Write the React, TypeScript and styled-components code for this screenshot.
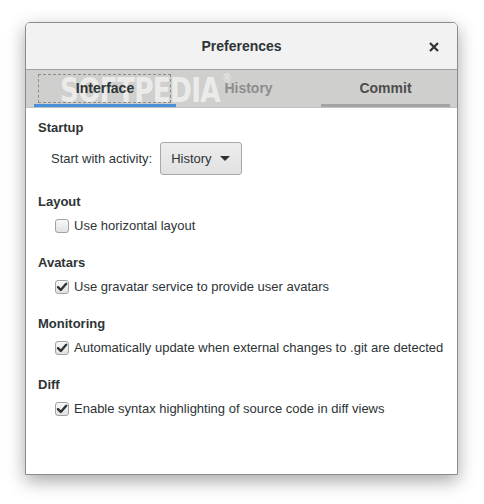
import styled, { createGlobalStyle } from "styled-components";

const GlobalStyle = createGlobalStyle`
  html, body {
    margin: 0;
    padding: 0;
    background: #ffffff;
  }
  body {
    font-family: "Liberation Sans", Arial, sans-serif;
    font-size: 13px;
    color: #2e3436;
  }
`;

const Page = styled.div`
  width: 484px;
  height: 504px;
  padding: 22px 0 0 25px;
  box-sizing: border-box;
`;

const Window = styled.div`
  width: 433px;
  height: 453px;
  box-sizing: border-box;
  border: 1px solid #8c8c8c;
  border-radius: 5px 5px 0 0;
  background: #ffffff;
  box-shadow: 0 6px 18px rgba(0, 0, 0, 0.35);
  display: flex;
  flex-direction: column;
  overflow: hidden;
`;

const TitleBar = styled.div`
  height: 46px;
  flex: none;
  background: #f2f2f2;
  border-bottom: 1px solid #a3a3a3;
  display: flex;
  align-items: center;
  justify-content: center;
  position: relative;
`;

const Title = styled.div`
  font-weight: bold;
  font-size: 14px;
  color: #2e3436;
`;

const CloseButton = styled.div`
  position: absolute;
  right: 17px;
  top: 18px;
  width: 12px;
  height: 12px;
  display: flex;
`;

const TabBar = styled.div`
  height: 37px;
  flex: none;
  background: #cfcfcd;
  border-bottom: 1px solid #c2c2c2;
  display: flex;
  padding: 0 7px 0 8px;
  position: relative;
`;

const Tab = styled.div<{ $width: number; $tone: string; $line: string }>`
  width: ${(p) => p.$width}px;
  flex: none;
  display: flex;
  align-items: center;
  justify-content: center;
  font-weight: bold;
  font-size: 14px;
  padding-top: 1px;
  box-sizing: border-box;
  color: ${(p) => p.$tone};
  border-bottom: 3px solid ${(p) => p.$line};
  position: relative;
`;

const FocusRing = styled.div`
  position: absolute;
  left: 4px;
  right: 5px;
  top: 4px;
  bottom: 1px;
  border: 1px dashed #8c8c8c;
`;

const Watermark = styled.div`
  position: absolute;
  left: 34px;
  top: 1px;
  font-family: "DejaVu Sans", sans-serif;
  font-weight: bold;
  font-size: 33px;
  letter-spacing: -1px;
  color: rgba(255, 255, 255, 0.62);
  transform: scaleX(0.8);
  transform-origin: left top;
  pointer-events: none;
  sup {
    font-size: 12px;
    font-weight: normal;
    vertical-align: top;
    margin-left: 3px;
  }
`;

const Content = styled.div`
  padding: 12px 12px 0 12px;
  display: flex;
  flex-direction: column;
`;

const Section = styled.div`
  display: flex;
  flex-direction: column;
  margin-bottom: 21px;
`;

const Heading = styled.div`
  font-weight: bold;
  line-height: 16px;
  margin-bottom: 8px;
`;

const ActivityRow = styled.div`
  display: flex;
  align-items: center;
  gap: 8px;
  padding-left: 13px;
  margin-top: -2px;
  margin-bottom: -2px;
`;

const Dropdown = styled.div`
  width: 82px;
  height: 33px;
  box-sizing: border-box;
  border: 1px solid #a8a8a8;
  border-radius: 3px;
  background: linear-gradient(#ededed, #e1e1e1);
  display: flex;
  align-items: center;
  padding: 0 11px 0 10px;
  justify-content: space-between;
  color: #2e3436;
`;

const Arrow = styled.span`
  width: 0;
  height: 0;
  border-left: 5px solid transparent;
  border-right: 5px solid transparent;
  border-top: 5px solid #2e3436;
`;

const CheckRow = styled.label`
  display: flex;
  align-items: center;
  gap: 5px;
  padding-left: 17px;
  line-height: 16px;
`;

const Box = styled.span`
  width: 14px;
  height: 14px;
  box-sizing: border-box;
  border: 1px solid #a2a2a2;
  border-radius: 3px;
  background: linear-gradient(#f8f8f8, #e2e2e2);
  display: flex;
  align-items: center;
  justify-content: center;
  flex: none;
`;

function Check({ checked, label }: { checked: boolean; label: string }) {
  return (
    <CheckRow>
      <Box>
        {checked && (
          <svg width="12" height="12" viewBox="0 0 12 12">
            <path d="M2 6.2 L4.8 9 L10.2 2.8" fill="none" stroke="#2e3436" strokeWidth="2.4" strokeLinecap="round" strokeLinejoin="round" />
          </svg>
        )}
      </Box>
      <span>{label}</span>
    </CheckRow>
  );
}

export default function App() {
  return (
    <>
      <GlobalStyle />
      <Page>
        <Window>
          <TitleBar>
            <Title>Preferences</Title>
            <CloseButton>
              <svg width="12" height="12" viewBox="0 0 12 12">
                <path d="M2 2 L10 10 M10 2 L2 10" stroke="#2e3436" strokeWidth="2.2" />
              </svg>
            </CloseButton>
          </TitleBar>
          <TabBar>
            <Watermark>
              SOFTPEDIA<sup>®</sup>
            </Watermark>
            <Tab $width={142} $tone="#2e3436" $line="#4a90d9">
              <FocusRing />
              Interface
            </Tab>
            <Tab $width={145} $tone="#8d8d8d" $line="transparent">History</Tab>
            <Tab $width={129} $tone="#4d4d4d" $line="#a3a3a3">Commit</Tab>
          </TabBar>
          <Content>
            <Section>
              <Heading>Startup</Heading>
              <ActivityRow>
                <span>Start with activity:</span>
                <Dropdown>
                  <span>History</span>
                  <Arrow />
                </Dropdown>
              </ActivityRow>
            </Section>
            <Section>
              <Heading>Layout</Heading>
              <Check checked={false} label="Use horizontal layout" />
            </Section>
            <Section>
              <Heading>Avatars</Heading>
              <Check checked label="Use gravatar service to provide user avatars" />
            </Section>
            <Section>
              <Heading>Monitoring</Heading>
              <Check checked label="Automatically update when external changes to .git are detected" />
            </Section>
            <Section>
              <Heading>Diff</Heading>
              <Check checked label="Enable syntax highlighting of source code in diff views" />
            </Section>
          </Content>
        </Window>
      </Page>
    </>
  );
}
